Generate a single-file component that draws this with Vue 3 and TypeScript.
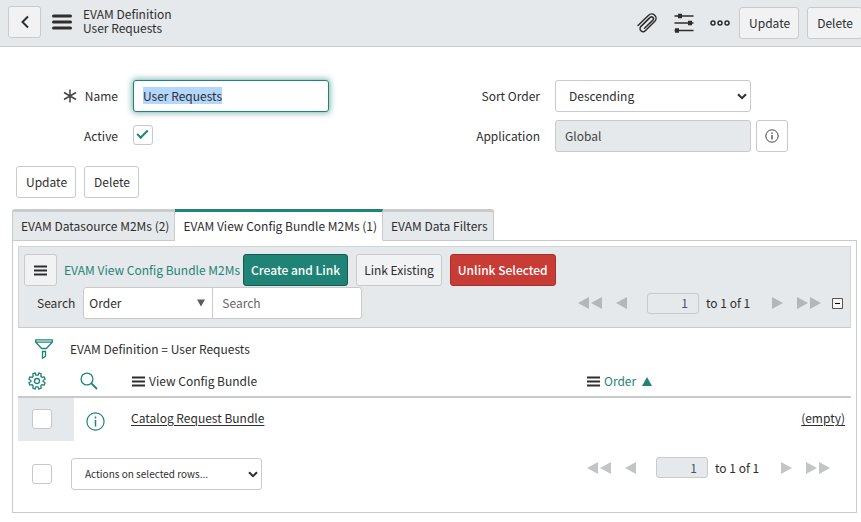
<script setup lang="ts">
import { onMounted, ref } from 'vue'

interface RelatedTab {
  id: string
  label: string
}

interface BundleRow {
  id: number
  bundle: string
  order: string
}

const tabs: RelatedTab[] = [
  { id: 'datasource', label: 'EVAM Datasource M2Ms (2)' },
  { id: 'bundles', label: 'EVAM View Config Bundle M2Ms (1)' },
  { id: 'filters', label: 'EVAM Data Filters' },
]
const activeTab = ref('bundles')

const rows: BundleRow[] = [{ id: 1, bundle: 'Catalog Request Bundle', order: '(empty)' }]

const name = ref('User Requests')
const active = ref(true)
const sortOrder = ref('Descending')
const searchField = ref('Order')
const searchText = ref('')
const topPage = ref('1')
const bottomPage = ref('1')
const nameInput = ref<HTMLInputElement | null>(null)

onMounted(() => {
  nameInput.value?.focus()
  nameInput.value?.select()
})
</script>

<template>
  <div class="page">
    <header class="header">
      <button class="btn btn-icon" type="button" aria-label="Back">
        <svg width="10" height="14" viewBox="0 0 10 14"><path d="M8 1.5 2.5 7 8 12.500" fill="none" stroke="#2e2e2e" stroke-width="2" /></svg>
      </button>
      <button class="plain menu" type="button" aria-label="Additional actions">
        <svg width="20" height="16" viewBox="0 0 20 16"><path d="M1.500 2h17M1.500 8h17M1.500 14h17" stroke="#2e2e2e" stroke-width="3" stroke-linecap="round" /></svg>
      </button>
      <h1 class="title"><span>EVAM Definition</span><span>User Requests</span></h1>
      <div class="tools">
        <button class="plain" type="button" aria-label="Manage attachments">
          <svg width="22" height="22" viewBox="0 0 22 22">
            <path d="M2 13.500 12.600 3.300a4.300 4.300 0 0 1 6.200 6L9.300 18.700a3 3 0 0 1-4.400-4.200l9.200-9.100a1.900 1.900 0 0 1 2.800 2.700L8.500 16.300" fill="none" stroke="#2e2e2e" stroke-width="1.500" stroke-linecap="round" />
            <path d="m5 14.400 7.700-7.500" stroke="#2e2e2e" stroke-width="1.200" />
          </svg>
        </button>
        <button class="plain" type="button" aria-label="Personalize form">
          <svg width="20" height="20" viewBox="0 0 20 20">
            <path d="M.5 3h19M.5 10h19M.5 17.500h19" stroke="#2e2e2e" stroke-width="1.600" />
            <path d="M4 .8h4v4.400H4zM14 7.800h4v4.400h-4zM1 15.300h4v4.400H1z" fill="#2e2e2e" />
          </svg>
        </button>
        <button class="plain more" type="button" aria-label="More options">
          <svg width="20" height="6" viewBox="0 0 20 6" fill="none" stroke="#2e2e2e" stroke-width="1.500"><circle cx="3" cy="3" r="2" /><circle cx="10" cy="3" r="2" /><circle cx="17" cy="3" r="2" /></svg>
        </button>
        <button class="btn" type="button">Update</button>
        <button class="btn" type="button">Delete</button>
      </div>
    </header>

    <main>
      <form class="form" @submit.prevent>
        <div class="field">
          <label for="name">
            <svg class="required" width="14" height="14" viewBox="0 0 14 14"><path d="M7 .5v13M1 3.500l12 7M13 3.500l-12 7" stroke="#444" stroke-width="1.500" /></svg>
            Name
          </label>
          <input id="name" ref="nameInput" v-model="name" class="control name-input" type="text" />
        </div>
        <div class="field">
          <label for="sort">Sort Order</label>
          <span class="select-box wide">
            <select id="sort" v-model="sortOrder" class="control">
              <option>Descending</option>
              <option>Ascending</option>
            </select>
            <svg width="10" height="7" viewBox="0 0 10 7"><path d="m1 1.200 4 4 4-4" fill="none" stroke="#2e2e2e" stroke-width="2" /></svg>
          </span>
        </div>
        <div class="field">
          <label for="active">Active</label>
          <input id="active" v-model="active" class="check" type="checkbox" />
        </div>
        <div class="field">
          <label for="application">Application</label>
          <input id="application" class="control" type="text" value="Global" readonly />
          <button class="btn info" type="button" aria-label="Application details">
            <svg width="14" height="14" viewBox="0 0 14 14"><circle cx="7" cy="7" r="6.200" fill="none" stroke="#444" /><path d="M7 6v4.500M7 3.500V5" stroke="#444" stroke-width="1.300" /></svg>
          </button>
        </div>
      </form>

      <div class="actions">
        <button class="btn white" type="button">Update</button>
        <button class="btn white" type="button">Delete</button>
      </div>

      <section class="related">
        <div class="tabs" role="tablist">
          <button
            v-for="tab in tabs"
            :key="tab.id"
            class="tab"
            :class="{ current: tab.id === activeTab }"
            type="button"
            role="tab"
            :aria-selected="tab.id === activeTab"
            @click="activeTab = tab.id"
          >{{ tab.label }}</button>
        </div>

        <div class="panel" role="tabpanel">
          <div class="toolbar">
            <div class="toolbar-row">
              <button class="btn btn-icon" type="button" aria-label="List controls">
                <svg width="13" height="11" viewBox="0 0 13 11"><path d="M0 1.500h13M0 5.500h13M0 9.500h13" stroke="#2e2e2e" stroke-width="2" /></svg>
              </button>
              <a class="list-title" href="#">EVAM View Config Bundle M2Ms</a>
              <button class="btn compact primary" type="button">Create and Link</button>
              <button class="btn compact" type="button">Link Existing</button>
              <button class="btn compact danger" type="button">Unlink Selected</button>
            </div>
            <div class="search-row">
              <label for="search-field">Search</label>
              <div class="search-group">
                <span class="select-box">
                  <select id="search-field" v-model="searchField" class="control">
                    <option>Order</option>
                    <option>View Config Bundle</option>
                  </select>
                  <svg width="8" height="8" viewBox="0 0 8 8"><path d="M0 .5h8L4 7.500z" fill="#5c5c5c" /></svg>
                </span>
                <input v-model="searchText" class="control" type="search" placeholder="Search" aria-label="Search text" />
              </div>
              <nav class="pager" aria-label="Pages, top">
                <button class="plain" type="button" aria-label="First page"><svg width="24" height="12" viewBox="0 0 24 12"><path d="M11 0v12L0 6zM24 0v12L13 6z" /></svg></button>
                <button class="plain" type="button" aria-label="Previous page"><svg width="11" height="12" viewBox="0 0 11 12"><path d="M11 0v12L0 6z" /></svg></button>
                <input v-model="topPage" type="text" aria-label="Page" />
                <span class="count">to 1 of 1</span>
                <button class="plain" type="button" aria-label="Next page"><svg width="11" height="12" viewBox="0 0 11 12"><path d="M0 0v12l11-6z" /></svg></button>
                <button class="plain" type="button" aria-label="Last page"><svg width="24" height="12" viewBox="0 0 24 12"><path d="M0 0v12l11-6zM13 0v12l11-6z" /></svg></button>
              </nav>
              <button class="plain collapse" type="button" aria-label="Collapse list">
                <svg width="11" height="11" viewBox="0 0 11 11"><path d="M.5.5h10v10H.5z" fill="#f7f7f7" stroke="#555" /><path d="M3 5.500h5" stroke="#000" /></svg>
              </button>
            </div>
          </div>

          <div class="filter">
            <button class="plain" type="button" aria-label="Show filter">
              <svg width="18" height="20" viewBox="0 0 18 20" fill="none" stroke="#1f8476" stroke-width="1.300"><path d="M.7.800h16.600v2.400l-6 6.300H6.700L.7 3.200zM.7 3.200h16.600M7.500 12.500h3v4.700l-3 2z" /></svg>
            </button>
            <a href="#">EVAM Definition = User Requests</a>
          </div>

          <table class="list">
            <thead>
              <tr>
                <th class="col-check">
                  <button class="plain" type="button" aria-label="Personalize list">
                    <svg width="18" height="18" viewBox="0 0 18 18" fill="none" stroke="#1f8476" stroke-width="1.300" stroke-linejoin="round">
                      <path d="M7.800 3.200 7.300.9 4.800 1.900l.4 2.400-1 1L1.900 4.800.9 7.300l2 1.200v1l-2 1.200 1 2.500 2.300-.5 1 1-.4 2.400 2.500 1 .5-2.300h2.400l.5 2.300 2.500-1-.4-2.400 1-1 2.300.5 1-2.500-2-1.200v-1l2-1.200-1-2.500-2.300.5-1-1 .4-2.400-2.500-1-.5 2.300z" />
                      <circle cx="9" cy="9" r="2.500" />
                    </svg>
                  </button>
                </th>
                <th class="col-info">
                  <button class="plain" type="button" aria-label="Search columns">
                    <svg width="18" height="18" viewBox="0 0 18 18" fill="none" stroke="#1f8476"><circle cx="7" cy="7" r="5.900" stroke-width="1.300" /><path d="m11.400 11.400 5.600 5.600" stroke-width="1.800" /></svg>
                  </button>
                </th>
                <th class="col-name">
                  <span class="heading">
                    <svg width="13" height="11" viewBox="0 0 13 11"><path d="M0 1.500h13M0 5.500h13M0 9.500h13" stroke="#2e2e2e" stroke-width="2" /></svg>
                    <a href="#">View Config Bundle</a>
                  </span>
                </th>
                <th class="col-order">
                  <span class="heading">
                    <svg width="13" height="11" viewBox="0 0 13 11"><path d="M0 1.500h13M0 5.500h13M0 9.500h13" stroke="#2e2e2e" stroke-width="2" /></svg>
                    <a class="sorted" href="#">Order <svg width="10" height="9" viewBox="0 0 10 9"><path d="M5 0l5 9H0z" fill="#1f8476" /></svg></a>
                  </span>
                </th>
              </tr>
            </thead>
            <tbody>
              <tr v-for="row in rows" :key="row.id">
                <td class="col-check"><input class="check" type="checkbox" aria-label="Select record" /></td>
                <td class="col-info">
                  <button class="plain preview" type="button" aria-label="Preview record">
                    <svg width="19" height="19" viewBox="0 0 19 19"><circle cx="9.500" cy="9.500" r="8.600" fill="none" stroke="#1f8476" stroke-width="1.200" /><path d="M9.500 8v6.500M9.500 4.500v2" stroke="#1f8476" stroke-width="1.500" /></svg>
                  </button>
                </td>
                <td class="col-name"><a href="#">{{ row.bundle }}</a></td>
                <td class="col-order"><a href="#">{{ row.order }}</a></td>
              </tr>
            </tbody>
          </table>

          <div class="footer">
            <input class="check" type="checkbox" aria-label="Select all records" />
            <span class="select-box row-actions">
              <select class="control" aria-label="Actions on selected rows">
                <option>Actions on selected rows...</option>
              </select>
              <svg width="10" height="7" viewBox="0 0 10 7"><path d="m1 1.200 4 4 4-4" fill="none" stroke="#2e2e2e" stroke-width="2" /></svg>
            </span>
            <nav class="pager" aria-label="Pages, bottom">
              <button class="plain" type="button" aria-label="First page"><svg width="24" height="12" viewBox="0 0 24 12"><path d="M11 0v12L0 6zM24 0v12L13 6z" /></svg></button>
              <button class="plain" type="button" aria-label="Previous page"><svg width="11" height="12" viewBox="0 0 11 12"><path d="M11 0v12L0 6z" /></svg></button>
              <input v-model="bottomPage" type="text" aria-label="Page" />
              <span class="count">to 1 of 1</span>
              <button class="plain" type="button" aria-label="Next page"><svg width="11" height="12" viewBox="0 0 11 12"><path d="M0 0v12l11-6z" /></svg></button>
              <button class="plain" type="button" aria-label="Last page"><svg width="24" height="12" viewBox="0 0 24 12"><path d="M0 0v12l11-6zM13 0v12l11-6z" /></svg></button>
            </nav>
          </div>
        </div>
      </section>
    </main>
  </div>
</template>

<style>
body {
  background: #fff;
}
</style>

<style scoped>
.page {
  overflow: hidden;
  font-family: "Noto Sans CJK SC", "Noto Sans", sans-serif;
  font-size: 12px;
  line-height: 18px;
  color: #2e2e2e;
}
.page * {
  box-sizing: border-box;
}
button,
input,
select {
  margin: 0;
  font: inherit;
  color: inherit;
}
a {
  color: inherit;
  text-decoration: none;
}
svg {
  display: block;
  flex: none;
}
.plain {
  display: block;
  padding: 0;
  border: 0;
  background: none;
}
.btn {
  display: flex;
  align-items: center;
  justify-content: center;
  height: 32px;
  padding: 0 8px 0 9px;
  border: 1px solid #c8cacb;
  border-radius: 3px;
  background: #f1f2f4;
  white-space: nowrap;
}
.btn-icon {
  width: 33px;
  padding: 0;
}
.compact {
  padding: 0 7px;
}
.white {
  background: #fff;
}
.primary {
  border-color: #14584f;
  background: #1f8476;
  color: #fff;
  font-weight: 500;
}
.danger {
  border-color: #a5302b;
  background: #c83c36;
  color: #fff;
  font-weight: 500;
}
.control {
  height: 32px;
  min-width: 0;
  padding: 0 9px 1px;
  border: 1px solid #c8cacb;
  border-radius: 3px;
  background: #fff;
  outline: 0;
  appearance: none;
}
.check {
  display: block;
  width: 20px;
  height: 20px;
  border: 1px solid #c5c7c8;
  border-radius: 3px;
  background: #fff;
  appearance: none;
}
.check:checked::before {
  content: "";
  display: block;
  width: 9px;
  height: 4px;
  margin: 4px 3px;
  border: solid #1f8476;
  border-width: 0 0 2px 2px;
  transform: rotate(-45deg);
}
.select-box {
  display: grid;
  align-items: center;
}
.select-box > * {
  grid-area: 1 / 1;
}
.select-box select {
  width: 100%;
}
.select-box svg {
  justify-self: end;
  margin-right: 4px;
  pointer-events: none;
}

.header {
  display: flex;
  align-items: center;
  height: 47px;
  padding: 0 0 2px 8px;
  border-bottom: 1px solid #c8cacb;
  background: #e6e9eb;
}
.menu {
  margin: 0 11px;
}
.title {
  display: grid;
  margin: 0;
  padding-bottom: 2px;
  font-size: 12px;
  font-weight: 400;
  line-height: 14px;
}
.tools {
  display: flex;
  align-items: center;
  gap: 8px;
  margin: 0 -1px 0 auto;
  padding-top: 1px;
}
.tools .plain {
  margin-right: 8px;
}
.tools .more {
  margin-right: 1px;
}

.form {
  display: grid;
  grid-template-columns: 1fr 1fr;
  gap: 8px 0;
  padding: 33px 9px 0 8px;
}
.field {
  display: flex;
  align-items: center;
  height: 32px;
}
.field label {
  display: flex;
  align-items: center;
  justify-content: flex-end;
  gap: 8px;
  width: 110px;
  margin-right: 15px;
  padding-bottom: 1px;
}
.field > .check {
  margin-bottom: 2px;
}
.field > .control,
.wide {
  width: 196px;
}
.wide .control {
  padding: 0 13px 1px;
}
.name-input:focus {
  border-color: #1f8476;
  box-shadow: 0 0 6px 1px #1f847699;
}
.name-input::selection {
  background: #b3d7ff;
  color: #2e2e2e;
}
.field .control:read-only:not(select) {
  background: #e6e9eb;
  color: #444;
}
.info {
  width: 32px;
  margin-left: 5px;
  padding: 0;
  background: #fff;
}
.actions {
  display: flex;
  gap: 8px;
  padding: 14px 16px 11px;
}

.related {
  padding: 0 4px 9px 12px;
}
.tabs {
  display: flex;
}
.tab {
  height: 32px;
  margin-bottom: -1px;
  padding: 0 5px 0 8px;
  border: 1px solid #c8cacb;
  border-top-width: 3px;
  border-left-width: 0;
  background: #e6e9eb;
  white-space: nowrap;
}
.tab:first-child {
  border-left-width: 1px;
  border-radius: 3px 0 0;
}
.tab:last-child {
  border-radius: 0 3px 0 0;
}
.tab.current {
  border-top-color: #1f8476;
  border-bottom-color: #fff;
  background: #fff;
}
.panel {
  padding: 5px 5px 22px;
  border: 1px solid #c8cacb;
}
.toolbar {
  padding: 7px 5px 8px;
  border: 1px solid #d0d5d8;
  border-bottom-color: #c8cacb;
  background: #e6e9eb;
}
.toolbar-row {
  display: flex;
  align-items: center;
  gap: 8px;
}
.list-title {
  margin: 0 -5px 0 -1px;
  color: #1f8476;
  white-space: nowrap;
}
.search-row {
  display: flex;
  align-items: center;
  margin-top: 1px;
  padding-left: 13px;
}
.search-group {
  display: flex;
  margin-left: 8px;
}
.search-group .select-box {
  width: 130px;
}
.search-group .select-box svg {
  margin-right: 8px;
}
.search-group select {
  padding: 0 5px 1px;
  border-radius: 3px 0 0 3px;
}
.search-group input {
  width: 150px;
  margin-left: -1px;
  border-radius: 0 3px 3px 0;
}
.search-group input::placeholder {
  color: #666;
}
.pager {
  display: flex;
  align-items: center;
  margin-left: auto;
  fill: #c2c5c6;
}
.toolbar .pager {
  fill: #b3b7b8;
}
.pager .plain + .plain {
  margin-left: 14px;
}
.pager input {
  width: 52px;
  height: 21px;
  margin: 0 7px 0 20px;
  padding: 0 10px 1px;
  border: 1px solid #c8cacb;
  border-radius: 3px;
  background: #e6e9eb;
  color: #485464;
  text-align: right;
}
.count {
  min-width: 46px;
  margin-right: 20px;
  white-space: nowrap;
}
.collapse {
  margin: 0 2px 0 11px;
}

.filter {
  display: flex;
  align-items: center;
  gap: 17px;
  height: 38px;
  padding: 4px 17px 0;
}
.list {
  width: 100%;
  border-spacing: 0;
  table-layout: fixed;
}
.list th {
  height: 32px;
  padding: 0 7px;
  border-bottom: 2px solid #c8cacb;
  font-weight: 400;
  text-align: left;
}
.list .col-check {
  width: 56px;
  padding: 0 10px;
}
.list .col-info {
  width: 51px;
}
.list .col-name {
  width: 456px;
}
.list th.col-order,
.list th.col-info {
  padding: 0 6px;
}
.heading,
.sorted {
  display: flex;
  align-items: center;
  gap: 4px;
}
.sorted {
  gap: 6px;
  color: #1f8476;
}
.list td {
  height: 43px;
  padding: 0 6px 3px;
}
.list td.col-check {
  padding: 0 14px 1px;
  background: #e6e9eb;
}
.list td.col-info {
  padding: 3px 12px 0;
}
.list td a {
  text-decoration: underline;
  text-underline-offset: 2px;
}
.list td.col-order {
  text-align: right;
}
.footer {
  display: flex;
  align-items: center;
  padding: 17px 21px 0 14px;
}
.footer .pager {
  align-self: flex-start;
  margin-top: -1px;
}
.row-actions {
  width: 191px;
  margin-left: 19px;
}
.row-actions .control {
  padding: 0 13px;
  font-size: 10px;
}
</style>
